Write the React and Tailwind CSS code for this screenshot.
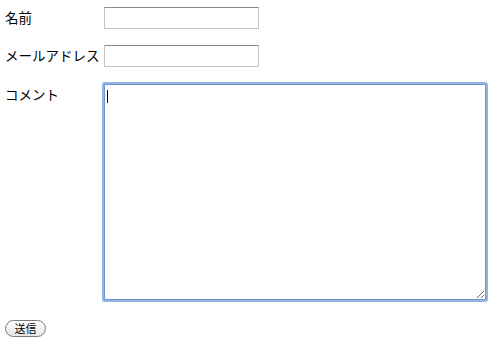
import React from 'react';

const App = () => {
  const font = { fontFamily: '"Lucida Grande", "Noto Sans CJK JP", sans-serif' };
  return (
    <div className="w-[495px] h-[344px] bg-white text-black text-[13.5px] overflow-hidden" style={font}>
      <form className="pl-[5px] pt-[7px]">
        <div className="flex items-center h-[22px]">
          <label className="w-[99px] leading-none">名前</label>
          <input type="text" className="w-[155px] h-[22px] border border-[#c4c4c4] border-t-[#8a8a8a] bg-white outline-none" />
        </div>
        <div className="flex items-center h-[22px] mt-[16px]">
          <label className="w-[99px] leading-none whitespace-nowrap">メールアドレス</label>
          <input type="text" className="w-[155px] h-[22px] border border-[#c4c4c4] border-t-[#8a8a8a] bg-white outline-none" />
        </div>
        <div className="flex items-start mt-[17px]">
          <label className="w-[99px] leading-none pt-[4px]">コメント</label>
          <div className="relative">
            <textarea className="block w-[382px] h-[216px] border border-[#6e95c7] rounded-[1px] shadow-[0_0_0_2px_#92b6e3] bg-white outline-none resize" />
            <div className="absolute left-[3px] top-[6px] w-px h-[13px] bg-black" />
          </div>
        </div>
        <div className="mt-[17px]">
          <button type="button" className="h-[17px] w-[41px] rounded-full border border-[#7a7a7a] bg-gradient-to-b from-white to-[#e6e6e6] text-[11px] leading-none">送信</button>
        </div>
      </form>
    </div>
  );
};

export default App;
